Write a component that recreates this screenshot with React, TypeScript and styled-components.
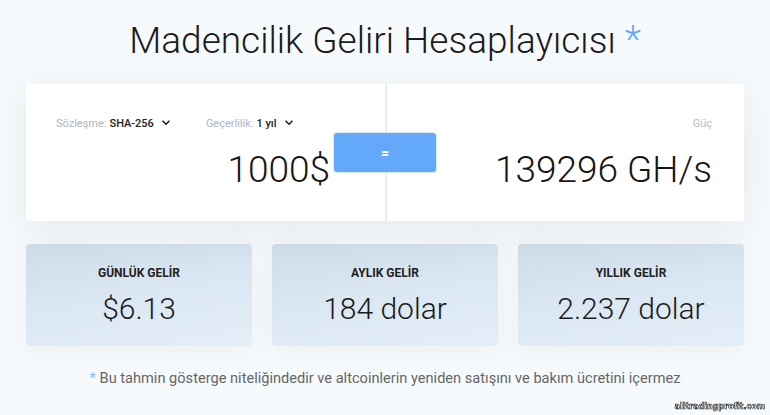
import React from 'react';
import styled, { createGlobalStyle } from 'styled-components';

const GlobalStyle = createGlobalStyle`
  html, body {
    margin: 0;
    padding: 0;
    background: #f7fafc;
    font-family: Roboto, "Liberation Sans", Arial, sans-serif;
  }
`;

interface Option {
  label: string;
  value: string;
}

interface Income {
  title: string;
  amount: string;
}

const options: Option[] = [
  { label: 'Sözleşme:', value: 'SHA-256' },
  { label: 'Geçerlilik:', value: '1 yıl' },
];

const incomes: Income[] = [
  { title: 'GÜNLÜK GELİR', amount: '$6.13' },
  { title: 'AYLIK GELİR', amount: '184 dolar' },
  { title: 'YILLIK GELİR', amount: '2.237 dolar' },
];

const Chevron = () => (
  <svg width="8" height="6" viewBox="0 0 8 6" fill="none">
    <path d="M1 1.2L4 4.2L7 1.2" stroke="#222" strokeWidth="1.6" strokeLinecap="round" strokeLinejoin="round" />
  </svg>
);

const App: React.FC = () => {
  return (
    <>
      <GlobalStyle />
      <Page>
        <Title>
          Madencilik Geliri Hesaplayıcısı <Star>*</Star>
        </Title>

        <Calculator>
          <Panel>
            <OptionRow>
              {options.map(o => (
                <Select key={o.label}>
                  <SelectLabel>{o.label}</SelectLabel>
                  <SelectValue>{o.value}</SelectValue>
                  <Chevron />
                </Select>
              ))}
            </OptionRow>
            <BigValue>1000$</BigValue>
          </Panel>
          <Divider />
          <Panel alignRight>
            <OptionRow>
              <PowerLabel>Güç</PowerLabel>
            </OptionRow>
            <BigValue>139296 GH/s</BigValue>
          </Panel>
          <EqualsButton type="button">=</EqualsButton>
        </Calculator>

        <IncomeGrid>
          {incomes.map(i => (
            <IncomeCard key={i.title}>
              <IncomeTitle>{i.title}</IncomeTitle>
              <IncomeAmount>{i.amount}</IncomeAmount>
            </IncomeCard>
          ))}
        </IncomeGrid>

        <Note>
          <Star small>*</Star> Bu tahmin gösterge niteliğindedir ve altcoinlerin yeniden satışını ve bakım ücretini içermez
        </Note>
        <Watermark>alltradingprofit.com</Watermark>
      </Page>
    </>
  );
};

export default App;

const Page = styled.div`
  width: 718px;
  margin: 0 auto;
  padding-top: 17px;
  display: flex;
  flex-direction: column;
`;

const Title = styled.h1`
  margin: 0;
  text-align: center;
  font-size: 37px;
  line-height: 46px;
  font-weight: 300;
  color: #1b1b1b;
`;

const Star = styled.span<{ small?: boolean }>`
  color: #64a9f9;
  font-weight: 300;
  font-size: ${props => (props.small ? '15px' : '38px')};
`;

const Calculator = styled.div`
  position: relative;
  margin-top: 20px;
  height: 137px;
  background: #fff;
  border-radius: 3px;
  box-shadow: 0 8px 40px rgba(60, 80, 110, 0.1);
  display: grid;
  grid-template-columns: 359px 2px 1fr;
`;

const Panel = styled.div<{ alignRight?: boolean }>`
  display: flex;
  flex-direction: column;
  align-items: ${props => (props.alignRight ? 'flex-end' : 'stretch')};
  padding: ${props => (props.alignRight ? '31px 32px 0 0' : '31px 55px 0 30px')};
`;

const Divider = styled.div`
  background: #e3eefa;
`;

const OptionRow = styled.div`
  display: flex;
  align-items: center;
  gap: 36px;
  height: 16px;
`;

const Select = styled.div`
  display: flex;
  align-items: center;
  gap: 3px;
  font-size: 11px;
  cursor: pointer;

  svg {
    margin-left: 5px;
  }
`;

const SelectLabel = styled.span`
  color: #aeb4c3;
`;

const SelectValue = styled.span`
  color: #222;
  font-weight: 500;
`;

const PowerLabel = styled.span`
  font-size: 11px;
  color: #b8bcc9;
`;

const BigValue = styled.div`
  margin-top: 16px;
  text-align: right;
  font-size: 37px;
  line-height: 46px;
  font-weight: 300;
  color: #161616;
`;

const EqualsButton = styled.button`
  position: absolute;
  left: 307px;
  top: 48px;
  width: 104px;
  height: 41px;
  border: 1px solid #dcebfd;
  border-radius: 4px;
  background: #64a9f9;
  color: #fff;
  font-family: inherit;
  font-weight: 700;
  font-size: 14px;
  cursor: pointer;
`;

const IncomeGrid = styled.div`
  margin-top: 23px;
  display: grid;
  grid-template-columns: repeat(3, 1fr);
  gap: 20px;
`;

const IncomeCard = styled.div`
  height: 102px;
  box-sizing: border-box;
  padding-top: 22px;
  border-radius: 4px;
  background: linear-gradient(170deg, #cfdde9 0%, #dbe7f2 50%, #e3eef8 100%);
  box-shadow: 0 6px 30px rgba(60, 80, 110, 0.06);
  display: flex;
  flex-direction: column;
  align-items: center;
`;

const IncomeTitle = styled.div`
  font-size: 12px;
  line-height: 14px;
  font-weight: 700;
  color: #222;
`;

const IncomeAmount = styled.div`
  margin-top: 11px;
  font-size: 30px;
  line-height: 36px;
  font-weight: 300;
  color: #1b1b1b;
`;

const Note = styled.p`
  margin: 22px 0 0;
  text-align: center;
  font-size: 14.6px;
  line-height: 20px;
  color: #666;
`;

const Watermark = styled.div`
  position: fixed;
  right: 5px;
  bottom: 4px;
  font-family: "DejaVu Sans", sans-serif;
  font-size: 8px;
  font-weight: 700;
  color: #fff;
  -webkit-text-stroke: 0.6px #111;
`;
